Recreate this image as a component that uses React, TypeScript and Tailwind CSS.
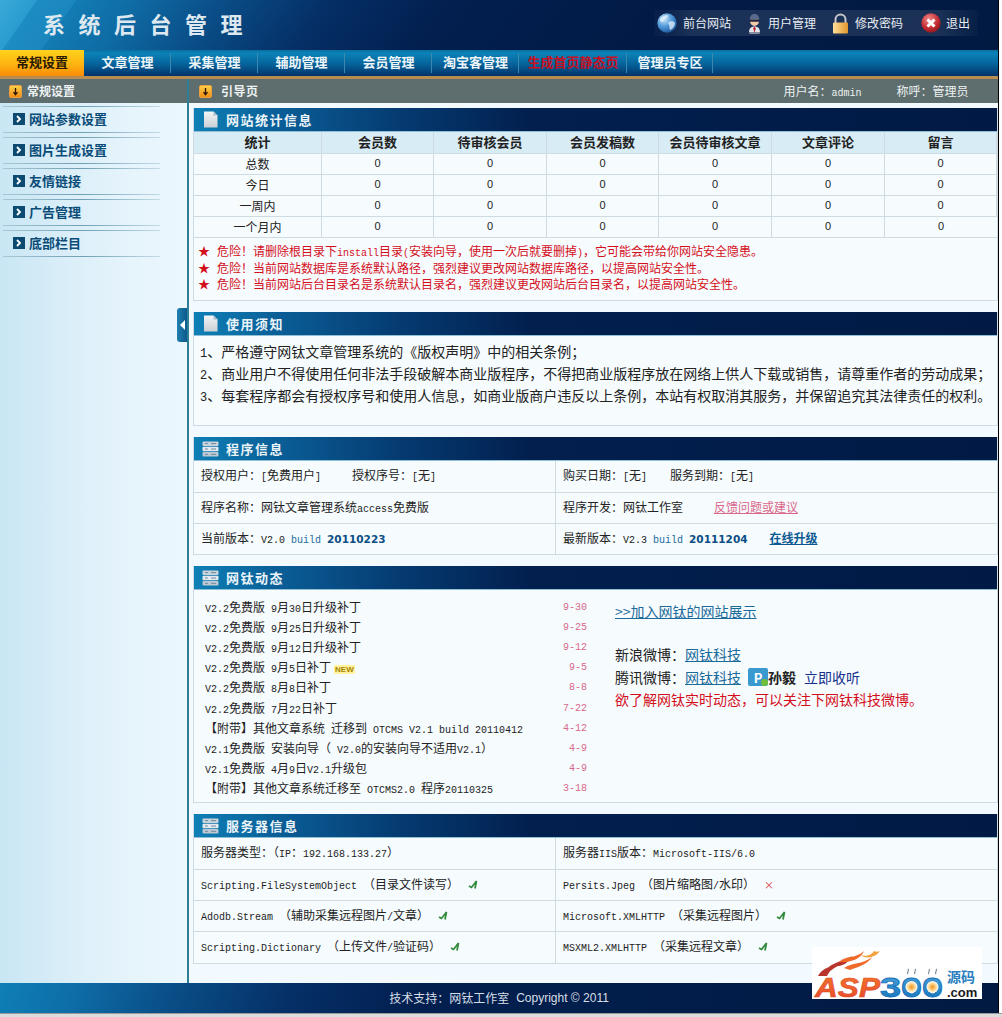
import React from "react";

function Mix({ text, latin = "text-[10px]" }: { text: string; latin?: string }) {
  const parts = text.split(/([\x20-\x7e]+)/);
  return (
    <>
      {parts.map((p, i) =>
        /^[\x20-\x7e]+$/.test(p) ? (
          <span key={i} className={`font-['Liberation_Mono',monospace] whitespace-pre ${latin}`}>{p}</span>
        ) : (
          <span key={i}>{p}</span>
        )
      )}
    </>
  );
}

function DownIcon() {
  return (
    <svg width="13" height="13" viewBox="0 0 13 13" className="shrink-0">
      <defs>
        <linearGradient id="dn" x1="0" y1="0" x2="0" y2="1">
          <stop offset="0" stopColor="#ffd24a" />
          <stop offset="1" stopColor="#f08a10" />
        </linearGradient>
      </defs>
      <rect x="0.5" y="0.5" width="12" height="12" rx="1.5" fill="url(#dn)" stroke="#e8a040" />
      <path d="M6.5 3v6M4.5 7.2l2 2.6 2-2.6" stroke="#2a1500" strokeWidth="1.3" fill="none" />
    </svg>
  );
}

function DocIcon() {
  return (
    <svg width="15" height="17" viewBox="0 0 15 17" className="shrink-0">
      <defs>
        <linearGradient id="doc" x1="0" y1="0" x2="0" y2="1">
          <stop offset="0" stopColor="#f4f6f8" />
          <stop offset="1" stopColor="#c9cfd4" />
        </linearGradient>
      </defs>
      <path d="M1 0.5h9.5l4 4v12h-13.5z" fill="url(#doc)" />
      <path d="M10.5 0.5v4h4z" fill="#aebbc6" />
    </svg>
  );
}

function ServerIcon() {
  return (
    <svg width="17" height="16" viewBox="0 0 17 16" className="-mx-px shrink-0">
      <rect x="0.5" y="0.5" width="16" height="4.4" rx="1" fill="#c8d3dc" />
      <rect x="0.5" y="5.8" width="16" height="4.4" rx="1" fill="#e3e9ee" />
      <rect x="0.5" y="11.1" width="16" height="4.4" rx="1" fill="#bcc8d2" />
      <path d="M3 2.6h3M9 2.6h5M3 8h3M9 8h5M3 13.3h3M9 13.3h5" stroke="#6f8aa2" strokeWidth="1" />
    </svg>
  );
}

function Globe() {
  return (
    <svg width="20" height="20" viewBox="0 0 20 20" className="shrink-0">
      <defs>
        <radialGradient id="gl" cx="0.35" cy="0.3" r="0.8">
          <stop offset="0" stopColor="#cfe8fb" />
          <stop offset="0.5" stopColor="#4d97d8" />
          <stop offset="1" stopColor="#164f94" />
        </radialGradient>
      </defs>
      <circle cx="10" cy="10" r="9.7" fill="url(#gl)" />
      <path d="M3 6c2-3 5-4 8-4 1 2-1 3-3 4s-1 3-3 3-2-1-2-3zM12 9c2-1 5-1 6 1 0 3-2 6-5 7-1-2 0-3-1-5s-1-2 0-3z" fill="#e6f2fb" opacity="0.75" />
    </svg>
  );
}

function UserIcon() {
  return (
    <svg width="17" height="21" viewBox="0 0 17 21" className="shrink-0">
      <path d="M3 19.5c0-4 2-6 5.5-6s5.500 2 5.500 6z" fill="#e4e6ee" />
      <path d="M8.500 13.500l-1.400 1.800 1.400 4.500 1.400-4.500z" fill="#c22a30" />
      <circle cx="8.500" cy="8.500" r="4.400" fill="#f6c9a8" />
      <path d="M3.600 6.500C4 2.500 6 1 8.500 1s4.500 1.500 4.900 5.500z" fill="#5a6a8c" />
      <rect x="3.500" y="6.500" width="10" height="2.300" rx="1" fill="#20263f" />
      <path d="M3.500 20.500h10" stroke="#8a8fa6" strokeWidth="1" />
    </svg>
  );
}

function LockIcon() {
  return (
    <svg width="17" height="21" viewBox="0 0 17 21" className="shrink-0">
      <defs>
        <linearGradient id="lk" x1="0" y1="0" x2="1" y2="0">
          <stop offset="0" stopColor="#ffe09a" />
          <stop offset="1" stopColor="#e0962c" />
        </linearGradient>
      </defs>
      <path d="M3.500 10V6.500a5 5 0 0 1 10 0V10" fill="none" stroke="#c4c8cc" strokeWidth="2" />
      <rect x="1" y="9.500" width="15" height="11" rx="1" fill="url(#lk)" />
    </svg>
  );
}

function CloseIcon() {
  return (
    <svg width="20" height="20" viewBox="0 0 20 20" className="shrink-0">
      <defs>
        <radialGradient id="cl" cx="0.4" cy="0.3" r="0.8">
          <stop offset="0" stopColor="#f08a8a" />
          <stop offset="0.6" stopColor="#c22a30" />
          <stop offset="1" stopColor="#7c1218" />
        </radialGradient>
      </defs>
      <circle cx="10" cy="10" r="9.700" fill="url(#cl)" />
      <path d="M6.500 6.500l7 7M13.500 6.500l-7 7" stroke="#fff" strokeWidth="3" />
    </svg>
  );
}

function Check() {
  return (
    <svg width="10" height="10" viewBox="0 0 10 10" className="ml-[9px] inline-block align-[-1px]">
      <path d="M1 6l2.500 1.500L8.500 1 7 8.500" fill="none" stroke="#2f8a3a" strokeWidth="1.700" />
    </svg>
  );
}

function Section({
  title,
  icon,
  children,
}: {
  title: string;
  icon: React.ReactNode;
  children: React.ReactNode;
}) {
  return (
    <section className="border-x border-b border-[#cfdbe2] bg-[#f6fbfe]">
      <div className="flex h-[23px] items-center gap-[8px] pl-[9px] text-[13px] font-bold tracking-[1.5px] text-[#eaf3f8] bg-[linear-gradient(90deg,#0e80b6_0%,#0a5f98_10%,#053a70_26%,#021f4e_42%,#011a45_100%)]">
        {icon}
        <span>{title}</span>
      </div>
      <div className="h-px bg-[#8fc0d6]" />
      {children}
    </section>
  );
}

const navItems: { label: string; w: string; cls?: string }[] = [
  { label: "文章管理", w: "w-[87px]" },
  { label: "采集管理", w: "w-[87px]" },
  { label: "辅助管理", w: "w-[87px]" },
  { label: "会员管理", w: "w-[87px]" },
  { label: "淘宝客管理", w: "w-[87px]" },
  { label: "生成首页静态页", w: "w-[108px]", cls: "text-[#c80f22]" },
  { label: "管理员专区", w: "w-[86px]" },
];

const sideItems = ["网站参数设置", "图片生成设置", "友情链接", "广告管理", "底部栏目"];

const statCols = ["统计", "会员数", "待审核会员", "会员发稿数", "会员待审核文章", "文章评论", "留言"];
const statRows = ["总数", "今日", "一周内", "一个月内"];

const news: [string, string, boolean?][] = [
  ["V2.2免费版 9月30日升级补丁", "9-30"],
  ["V2.2免费版 9月25日升级补丁", "9-25"],
  ["V2.2免费版 9月12日升级补丁", "9-12"],
  ["V2.2免费版 9月5日补丁", "9-5", true],
  ["V2.2免费版 8月8日补丁", "8-8"],
  ["V2.2免费版 7月22日补丁", "7-22"],
  ["【附带】其他文章系统 迁移到 OTCMS V2.1 build 20110412", "4-12"],
  ["V2.1免费版 安装向导（ V2.0的安装向导不适用V2.1）", "4-9"],
  ["V2.1免费版 4月9日V2.1升级包", "4-9"],
  ["【附带】其他文章系统迁移至 OTCMS2.0 程序20110325", "3-18"],
];

const warnings = [
  "危险！请删除根目录下install目录(安装向导，使用一次后就要删掉)，它可能会带给你网站安全隐患。",
  "危险！当前网站数据库是系统默认路径，强烈建议更改网站数据库路径，以提高网站安全性。",
  "危险！当前网站后台目录名是系统默认目录名，强烈建议更改网站后台目录名，以提高网站安全性。",
];

const notices = [
  "1、严格遵守网钛文章管理系统的《版权声明》中的相关条例；",
  "2、商业用户不得使用任何非法手段破解本商业版程序，不得把商业版程序放在网络上供人下载或销售，请尊重作者的劳动成果；",
  "3、每套程序都会有授权序号和使用人信息，如商业版商户违反以上条例，本站有权取消其服务，并保留追究其法律责任的权利。",
];

function TwoCol({
  rows,
}: {
  rows: [React.ReactNode, React.ReactNode, string][];
}) {
  return (
    <div>
      {rows.map(([a, b, h], i) => (
        <div key={i} className={`grid grid-cols-[362px_1fr] border-b border-[#cfdbe2] last:border-b-0 ${h}`}>
          <div className="flex items-center border-r border-[#cfdbe2] pb-[2px] pl-[7px] whitespace-pre">{a}</div>
          <div className="flex items-center pb-[2px] pl-[7px] whitespace-pre">{b}</div>
        </div>
      ))}
    </div>
  );
}

function Logo() {
  return (
    <svg width="170" height="60" viewBox="0 0 170 60" className="absolute left-[812px] top-[947px]">
      <defs>
        <linearGradient id="asp" x1="0" y1="0" x2="0" y2="1">
          <stop offset="0" stopColor="#f47a2a" />
          <stop offset="1" stopColor="#e8452c" />
        </linearGradient>
        <linearGradient id="num" x1="0" y1="0" x2="0" y2="1">
          <stop offset="0" stopColor="#4ea6dc" />
          <stop offset="1" stopColor="#1470b8" />
        </linearGradient>
        <radialGradient id="yolk">
          <stop offset="0" stopColor="#f2901e" />
          <stop offset="0.55" stopColor="#fbd48a" />
          <stop offset="1" stopColor="#ffffff" />
        </radialGradient>
      </defs>
      <rect width="170" height="52" fill="#fff" />
      <path d="M6 29C10 21 20 18 30 18 22 20 17 24 15 29zM14 23C20 15 30 15 40 9 36 15 33 18 27 19 22 19 18 20 14 23z" fill="#b8342c" />
      <path d="M27 15C34 8 44 12 52 4 49 11 42 14 34 15zM32 21C40 15 50 18 60 10 56 17 46 20 38 23z" fill="#ef6a2a" />
      <path d="M48 8C54 10 60 8 62 4c2 1 4 1 6 0-3 4-6 5-9 6-4 1-8 0-11-2z" fill="#f3a13c" />
      <text transform="translate(3 50) scale(1.13 1)" fontFamily="Liberation Sans" fontWeight="700" fontStyle="italic" fontSize="28" fill="url(#asp)" stroke="#d84a2a" strokeWidth="0.6">ASP</text>
      <text transform="translate(68 50) scale(1.35 1)" fontFamily="Liberation Sans" fontWeight="700" fontSize="28" fill="url(#num)" stroke="#1470b8" strokeWidth="0.8">300</text>
      <circle cx="99.500" cy="40" r="6" fill="url(#yolk)" />
      <circle cx="120.500" cy="40" r="6" fill="url(#yolk)" />
      <path d="M96 27c-2-2 2-3 0-5M103 27c-2-2 2-3 0-5M117 27c-2-2 2-3 0-5M124 27c-2-2 2-3 0-5" stroke="#7a8b99" strokeWidth="1.200" fill="none" />
      <text x="135" y="35" fontFamily="Noto Sans CJK SC" fontWeight="700" fontSize="14" fill="#2c7fc0">源码</text>
      <text x="135" y="50" fontFamily="Liberation Sans" fontWeight="700" fontSize="13" fill="#1a1a1a">.com</text>
    </svg>
  );
}

export default function App() {
  return (
    <div className="relative h-[1017px] w-[1002px] overflow-hidden bg-white font-['Noto_Sans_CJK_SC','Liberation_Sans',sans-serif] text-[12px] text-[#222]">
      <div className="flex h-[1013px] w-[999px] flex-col border-r border-black">
        <header className="flex h-[50px] shrink-0 items-center justify-between bg-[linear-gradient(125deg,#3aaad8_0,#2a9ccf_30px,#1d8cc2_31px,#1a86bd_62px,#137bb3_63px,#0f6ca5_110px,#0a4e88_180px,#052f66_270px,#021f4f_370px,#021a45_560px,#011a42_100%)]">
          <h1 className="pb-[4px] pl-[43px] text-[22px] font-bold leading-none tracking-[13.5px] text-[#dde8f0]">系统后台管理</h1>
          <nav className="mr-[20px] mt-[-4px] flex h-[26px] items-center bg-[linear-gradient(90deg,#ffffff05,#ffffff1a_12%,#ffffff1a_88%,#ffffff05)] pl-[3px] pr-[8px] text-[#e8edf2]">
            <Globe />
            <span className="ml-[6px]">前台网站</span>
            <span className="ml-[15px]"><UserIcon /></span>
            <span className="ml-[5px]">用户管理</span>
            <span className="ml-[16px]"><LockIcon /></span>
            <span className="ml-[6px]">修改密码</span>
            <span className="ml-[18px]"><CloseIcon /></span>
            <span className="ml-[5px]">退出</span>
          </nav>
        </header>

        <nav className="flex h-[29px] shrink-0 border-b-[3px] border-[#b88d52] bg-[linear-gradient(180deg,#0a6f9f_0%,#0b83b8_12%,#06629a_55%,#03326a_100%)] text-[13px] font-bold text-[#eef5f9]">
          <div className="flex w-[84px] items-center justify-center pb-[3px] text-[#2a1a00] bg-[linear-gradient(180deg,#ffd21c_0%,#fdb410_55%,#f98c06_100%)]">常规设置</div>
          {navItems.map((n) => (
            <div key={n.label} className={`my-[3px] flex items-center justify-center border-r border-[#3b87b0] pb-[3px] pl-[1px] ${n.w} ${n.cls ?? ""}`}>
              {n.label}
            </div>
          ))}
        </nav>

        <div className="flex h-[24px] shrink-0 items-center bg-[#5e6e6e] text-[#eef2f2]">
          <div className="flex h-full w-[187px] items-center gap-[5px] pl-[9px] font-bold">
            <DownIcon />
            <span>常规设置</span>
          </div>
          <div className="h-full w-[2px] bg-[#2b8098]" />
          <div className="flex flex-1 items-center pl-[10px] font-normal">
            <DownIcon />
            <span className="ml-[9px] font-bold tracking-[0.500px]">引导页</span>
            <span className="ml-[525px]"><Mix text="用户名：admin" /></span>
            <span className="ml-[35px]">称呼：管理员</span>
          </div>
        </div>

        <div className="flex min-h-0 flex-1">
          <aside className="relative w-[187px] shrink-0 bg-[linear-gradient(90deg,#c9e6f4_0%,#dceff9_40%,#e6f4fc_70%,#ecf7fe_100%)]">
            <ul className="pt-[3px]">
              {sideItems.map((s) => (
                <li key={s} className="mb-[4px] ml-[3px] flex h-[27px] w-[157px] items-center gap-[4px] border-y pb-[2px] pl-[10px] text-[13px] font-bold text-[#0a4c78] [border-image:linear-gradient(90deg,#a9c8d6,#6f9fb4_50%,#c5dde8)_1]">
                  <span className="flex h-[12px] w-[12px] items-center justify-center bg-[#0d4a72]">
                    <svg width="8" height="8" viewBox="0 0 8 8"><path d="M2 1l3 3-3 3" fill="none" stroke="#fff" strokeWidth="1.800" /></svg>
                  </span>
                  <span>{s}</span>
                </li>
              ))}
            </ul>
            <div className="absolute right-0 top-[205px] flex h-[34px] w-[10px] items-center justify-center rounded-l-[3px] bg-[linear-gradient(90deg,#1f7fae,#0c5a8c)]">
              <svg width="5" height="10" viewBox="0 0 5 10"><path d="M5 0v10L0 5z" fill="#fff" /></svg>
            </div>
          </aside>
          <div className="w-[2px] shrink-0 bg-[#2b8098]" />
          <main className="flex flex-1 flex-col gap-[11px] bg-[#f3faff] pl-[4px] pt-[5px]">
            <Section title="网站统计信息" icon={<DocIcon />}>
              <div className="grid grid-cols-[128px_112px_113px_112px_113px_113px_1fr] text-center">
                {statCols.map((c) => (
                  <div key={c} className="flex h-[22px] items-center justify-center border-b border-r border-[#cfdbe2] bg-[#d8ecf5] pb-[2px] text-[13px] font-bold last:border-r-0">
                    {c}
                  </div>
                ))}
                {statRows.map((r) => (
                  <React.Fragment key={r}>
                    <div className="flex h-[21px] items-center justify-center border-b border-r border-[#cfdbe2] pb-[1px]">{r}</div>
                    {[0, 1, 2, 3, 4, 5].map((i) => (
                      <div key={i} className="flex h-[21px] items-center justify-center border-b border-r border-[#cfdbe2] pb-[1px] font-['Liberation_Sans',sans-serif] text-[11px] last:border-r-0">
                        0
                      </div>
                    ))}
                  </React.Fragment>
                ))}
              </div>
              <div className="h-[62px] pl-[4px] pt-[5px] text-[#d40f1c]">
                {warnings.map((w) => (
                  <div key={w} className="flex h-[16.500px] items-center whitespace-nowrap">
                    <span className="mr-[7px] text-[12px]">★</span>
                    <span><Mix text={w} /></span>
                  </div>
                ))}
              </div>
            </Section>

            <Section title="使用须知" icon={<DocIcon />}>
              <div className="h-[89px] pl-[6px] pt-[5px] text-[14px]">
                {notices.map((n) => (
                  <div key={n} className="flex h-[22px] items-center whitespace-nowrap">
                    <span><Mix text={n} latin="text-[12px]" /></span>
                  </div>
                ))}
              </div>
            </Section>

            <Section title="程序信息" icon={<ServerIcon />}>
              <TwoCol
                rows={[
                  [
                    <span><Mix text="授权用户：[免费用户]" /><span className="ml-[31px]"><Mix text="授权序号：[无]" /></span></span>,
                    <span><Mix text="购买日期：[无]" /><span className="ml-[23px]"><Mix text="服务到期：[无]" /></span></span>,
                    "h-[32px]",
                  ],
                  [
                    <span><Mix text="程序名称：网钛文章管理系统access免费版" /></span>,
                    <span>程序开发：网钛工作室<a className="ml-[31px] text-[#d9688a] underline">反馈问题或建议</a></span>,
                    "h-[31px]",
                  ],
                  [
                    <span><Mix text="当前版本：V2.0 " /><span className="font-['Liberation_Mono',monospace] text-[10px] text-[#1a6a9a]">build </span><b className="font-['DejaVu_Sans',sans-serif] text-[10.5px] text-[#0b4f85]">20110223</b></span>,
                    <span className="whitespace-pre"><Mix text="最新版本：V2.3 " /><span className="font-['Liberation_Mono',monospace] text-[10px] text-[#1a6a9a]">build </span><b className="font-['DejaVu_Sans',sans-serif] text-[10.5px] text-[#0b4f85]">20111204</b><a className="ml-[22px] font-bold text-[#0b5a90] underline">在线升级</a></span>,
                    "h-[30px]",
                  ],
                ]}
              />
            </Section>

            <Section title="网钛动态" icon={<ServerIcon />}>
              <div className="flex h-[212px] pl-[11px] pt-[7px]">
                <ul className="w-[382px]">
                  {news.map(([t, d, isNew], i) => (
                    <li key={i} className="flex h-[20.200px] items-center justify-between">
                      <span className="whitespace-nowrap">
                        <Mix text={t} />
                        {isNew && (
                          <span className="ml-[3px] bg-[#fff3a0] px-[1px] font-['Liberation_Sans',sans-serif] text-[8px] font-bold text-[#a88400]">NEW</span>
                        )}
                      </span>
                      <span className="font-['Liberation_Mono',monospace] text-[10px] text-[#d9688a]">{d}</span>
                    </li>
                  ))}
                </ul>
                <div className="ml-[28px] text-[14px]">
                  <a className="block pt-[4px] leading-[20px] text-[#1a6a9a] underline">&gt;&gt;加入网钛的网站展示</a>
                  <div className="mt-[23px] leading-[20px]">新浪微博：<a className="text-[#1a6a9a] underline">网钛科技</a></div>
                  <div className="mt-[3px] flex h-[20px] items-center">
                    腾讯微博：<a className="text-[#1a6a9a] underline">网钛科技</a>
                    <span className="relative ml-[7px] flex h-[18px] w-[20px] items-center justify-center rounded-[2px] bg-[#3a9ad0] text-[13px] font-bold leading-none text-white">
                      P
                      <span className="absolute bottom-0 right-0 h-[7px] w-[7px] rounded-full bg-[#6fbf3a]" />
                    </span>
                    <b className="font-bold">孙毅</b>
                    <a className="ml-[8px] text-[#16308c]">立即收听</a>
                  </div>
                  <div className="mt-[2px] leading-[20px] text-[#d40f1c]">欲了解网钛实时动态，可以关注下网钛科技微博。</div>
                </div>
              </div>
            </Section>

            <Section title="服务器信息" icon={<ServerIcon />}>
              <TwoCol
                rows={[
                  [<span><Mix text="服务器类型：（IP：192.168.133.27）" /></span>, <span><Mix text="服务器IIS版本：Microsoft-IIS/6.0" /></span>, "h-[32px]"],
                  [
                    <span><Mix text="Scripting.FileSystemObject （目录文件读写）" /><Check /></span>,
                    <span><Mix text="Persits.Jpeg （图片缩略图/水印）" /><span className="ml-[9px] text-[10px] text-[#e0303a]">×</span></span>,
                    "h-[31px]",
                  ],
                  [
                    <span><Mix text="Adodb.Stream （辅助采集远程图片/文章）" /><Check /></span>,
                    <span><Mix text="Microsoft.XMLHTTP （采集远程图片）" /><Check /></span>,
                    "h-[31px]",
                  ],
                  [
                    <span><Mix text="Scripting.Dictionary （上传文件/验证码）" /><Check /></span>,
                    <span><Mix text="MSXML2.XMLHTTP （采集远程文章）" /><Check /></span>,
                    "h-[31px]",
                  ],
                ]}
              />
            </Section>
          </main>
        </div>

        <footer className="flex h-[30px] shrink-0 items-center justify-center text-[#d8dfe6] bg-[linear-gradient(110deg,#0e7fb5_0,#0e6ea8_70px,#0a4f88_160px,#052f66_280px,#021f4f_400px,#011a42_100%)]">
          技术支持：网钛工作室 <span className="ml-[7px] font-['Liberation_Sans',sans-serif]">Copyright © 2011</span>
        </footer>
      </div>
      <div className="h-[4px] border-t border-[#9a9a9a] bg-[#dcdcdc]" />
      <Logo />
    </div>
  );
}
